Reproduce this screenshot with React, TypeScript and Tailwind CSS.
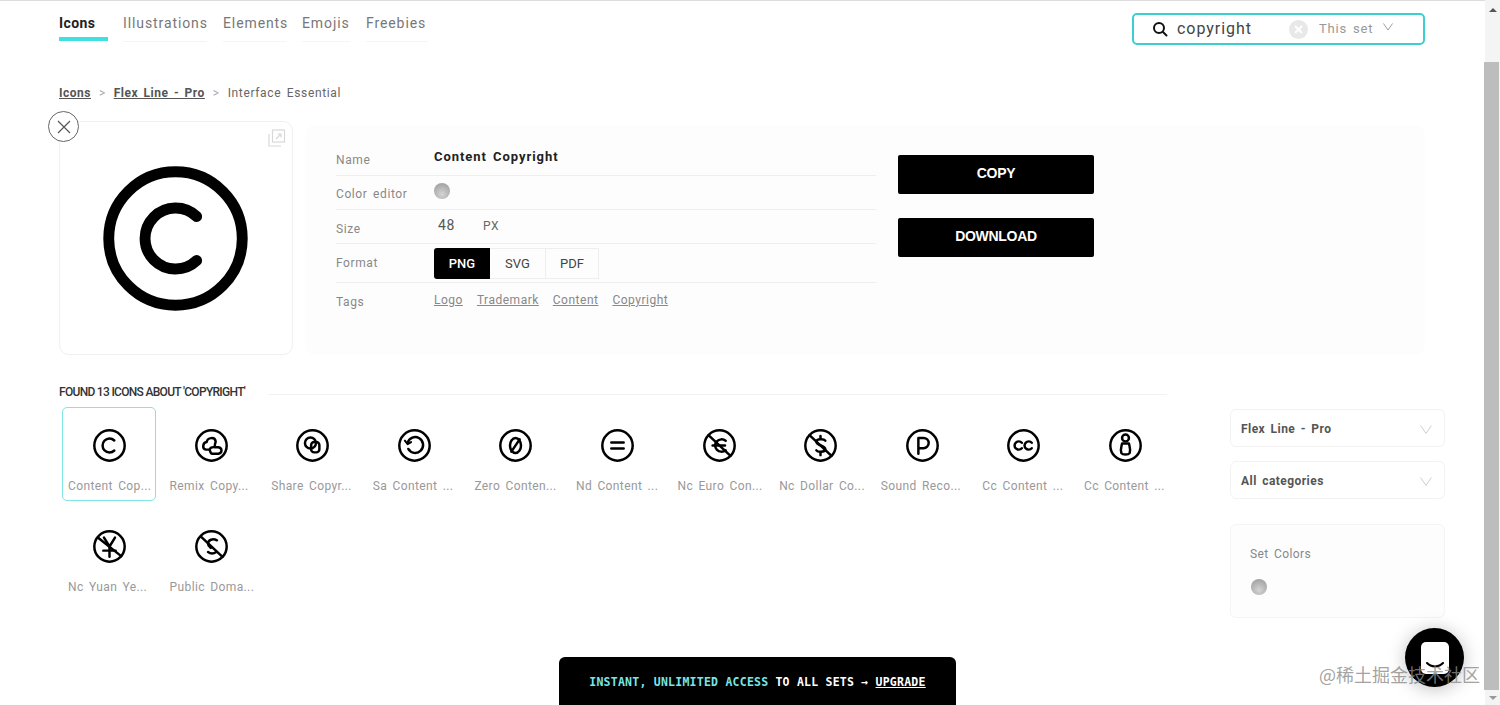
import React from "react";

const Ring = ({ children, size = 33 }: { children?: React.ReactNode; size?: number }) => (
  <svg width={size} height={size} viewBox="0 0 48 48" fill="none" stroke="#000" strokeWidth="3.6" strokeLinecap="round" strokeLinejoin="round">
    <circle cx="24" cy="24" r="22.1" />
    {children}
  </svg>
);

const Swatch = () => (
  <div className="w-4 h-4 rounded-full bg-[radial-gradient(circle_at_50%_70%,#d4d4d4,#969696)]" />
);

const Chevron = ({ w = 12, color = "#c4c4c4" }: { w?: number; color?: string }) => (
  <svg width={w} height={w * 0.75} viewBox="0 0 20 15" fill="none" stroke={color} strokeWidth="1.4">
    <path d="M1 1l9 13 9-13" />
  </svg>
);

const items: { label: string; g: React.ReactNode }[] = [
  { label: "Content Cop...", g: <path d="M31 16.700A10.100 10.100 0 1 0 31 31.300" /> },
  { label: "Remix Copy...", g: <path d="M17 19c-6 1-7 10-1 11h5c1-3 4-4 8-3.500M17 19c1-7 12-8 13-1 0 3-2 4-1 8.500h5c6 1 6 9 0 9.500H25c-3 0-3-6-4-5.500" /> },
  { label: "Share Copyr...", g: <><circle cx="21" cy="20.500" r="8" /><rect x="22" y="19" width="12" height="15" rx="4.500" /></> },
  { label: "Sa Content ...", g: <><path d="M14 20a11.500 11.500 0 1 1 1 9" /><path d="M10 17l4 5 5-3" strokeWidth="3" /></> },
  { label: "Zero Conten...", g: <><ellipse cx="24" cy="24" rx="8" ry="11" /><path d="M18 33l12-18" /></> },
  { label: "Nd Content ...", g: <path d="M15 19.500h18M15 28.500h18" /> },
  { label: "Nc Euro Con...", g: <><path d="M33 17a10 10 0 0 0-13 1c-3 3-3 9 0 12a10 10 0 0 0 13 1" /><path d="M14 24h18" /><path d="M8 9l32 30" /></> },
  { label: "Nc Dollar Co...", g: <><path d="M31 17c-2-3-12-3-13 1-1 6 14 6 13 12-1 4-11 4-13 1" /><path d="M24 10v3M24 35v3" /><path d="M8 9l32 30" /></> },
  { label: "Sound Reco...", g: <path d="M18 36V13h7.500a7.500 7.500 0 0 1 0 15H18" /> },
  { label: "Cc Content ...", g: <><path d="M21.500 20a6 6 0 1 0 0 8" /><path d="M36 20a6 6 0 1 0 0 8" /></> },
  { label: "Cc Content ...", g: <><circle cx="24" cy="13" r="5" /><path d="M19 21h10c1 5 3 9 1 14-2 3-10 3-12 0-2-5 0-9 1-14z" /></> },
  { label: "Nc Yuan Ye...", g: <><path d="M16 11l8 13 8-13M24 24v15M15 30h18" /><path d="M7 11l34 27" /></> },
  { label: "Public Doma...", g: <><path d="M32 15c-6-3-13-1-13 5 0 3 2 4 4 6" /><path d="M31 32c-3 2-8 3-12 0" /><path d="M9 10l31 29" /></> },
];

const font = "font-['Roboto',sans-serif]";

export default function App() {
  return (
    <div className={`relative flex w-full h-[705px] overflow-hidden bg-white ${font} [word-spacing:2px]`}>
      <div className="flex-1 min-w-0 flex flex-col">
        <div className="h-px bg-[#dcdcdc]" />
        {/* header */}
        <header className="flex items-start justify-between pl-[59px] pr-[60px] h-[70px]">
          <nav className="flex pt-[12px] text-[14px] tracking-[0.9px] text-[#777]">
            <div className="w-[49px] h-[28px] border-b-4 border-[#3fe0e0] font-bold text-[#222] tracking-[0.4px] mr-[15px]">Icons</div>
            <div className="w-[84px] h-[29px] border-b border-[#f5f5f5] mr-4 whitespace-nowrap">Illustrations</div>
            <div className="w-[63px] h-[29px] border-b border-[#f5f5f5] mr-4">Elements</div>
            <div className="w-[48px] h-[29px] border-b border-[#f5f5f5] mr-4">Emojis</div>
            <div className="w-[62px] h-[29px] border-b border-[#f5f5f5]">Freebies</div>
          </nav>
          <div className="mt-3 w-[293px] h-[32px] rounded-[5px] border-2 border-[#3ccfd2] flex items-center pl-[18px]">
            <svg width="16" height="16" viewBox="0 0 16 16" fill="none" stroke="#111" strokeWidth="2" strokeLinecap="round">
              <circle cx="7" cy="7" r="5" />
              <path d="M11 11l3.500 3.500" />
            </svg>
            <span className="ml-[9px] w-[112px] text-[16px] tracking-[0.95px] text-[#444]">copyright</span>
            <span className="w-[19px] h-[19px] rounded-full bg-[#e8e8e8] flex items-center justify-center">
              <svg width="9" height="9" viewBox="0 0 9 9" stroke="#fff" strokeWidth="2"><path d="M1 1l7 7M8 1l-7 7" /></svg>
            </span>
            <span className="ml-[11px] text-[13px] tracking-[0.8px] text-[#999]">This set</span>
            <span className="ml-[10px] mb-[4px]"><Chevron w={10} color="#777" /></span>
          </div>
        </header>

        <main className="flex flex-col pl-[59px]">
          <div className="h-[16px] mt-[14px] flex items-center text-[12px] tracking-[0.5px] text-[#666] whitespace-nowrap">
            <span className="font-bold underline text-[#555]">Icons</span>
            <span className="mx-2 text-[#aaa]">&gt;</span>
            <span className="font-bold underline text-[#555]">Flex Line - Pro</span>
            <span className="mx-2 text-[#aaa]">&gt;</span>
            <span className="tracking-[0.65px]">Interface Essential</span>
          </div>

          <section className="flex mt-[20px]">
            <div className="relative w-[234px] h-[234px] pr-[2px] rounded-[10px] border border-[#f0f0f0] flex items-center justify-center">
              <Ring size={145}><path d="M31 16.700A10.100 10.100 0 1 0 31 31.300" /></Ring>
              <div className="absolute left-[-12px] top-[-11px] w-[31px] h-[31px] rounded-full border border-[#666] bg-white flex items-center justify-center">
                <svg width="14" height="14" viewBox="0 0 14 14" stroke="#555" strokeWidth="1.200"><path d="M1 1l12 12M13 1L1 13" /></svg>
              </div>
              <svg className="absolute right-[6px] top-[7px]" width="18" height="18" viewBox="0 0 18 18" fill="none" stroke="#d8d8d8" strokeWidth="1.200">
                <rect x="4.500" y="1" width="12" height="12" />
                <path d="M1 5v12h12M8 10l5-5M9.500 5H13v3.500" />
              </svg>
            </div>

            <div className="ml-3 mt-1 w-[1120px] h-[230px] bg-[#fdfdfd] rounded-[10px] flex pl-[31px] pt-[16px]">
              <div className="w-[540px] text-[12px] tracking-[0.6px] text-[#888]">
                <div className="h-[35px] flex border-b border-[#eee]">
                  <div className="w-[98px] pt-[10px]">Name</div>
                  <div className="pt-[6px] text-[13px] font-bold text-[#222] tracking-[0.95px]">Content Copyright</div>
                </div>
                <div className="h-[34px] flex border-b border-[#eee]">
                  <div className="w-[98px] pt-[9px]">Color editor</div>
                  <div className="pt-[7px]"><Swatch /></div>
                </div>
                <div className="h-[34px] flex border-b border-[#eee]">
                  <div className="w-[98px] pt-[10px]">Size</div>
                  <div className="w-[49px] pt-[5px] pl-[4px] text-[14px] leading-[20px] text-[#555]">48</div>
                  <div className="pt-[7px] text-[#666]">PX</div>
                </div>
                <div className="h-[39px] flex border-b border-[#eee]">
                  <div className="w-[98px] pt-[10px]">Format</div>
                  <div className="pt-1">
                    <div className="flex h-[31px] text-[13px] tracking-[0px] text-[#444]">
                      <div className="w-[56px] bg-black text-white font-medium rounded-l-[3px] flex items-center justify-center">PNG</div>
                      <div className="w-[55px] border-y border-[#eee] flex items-center justify-center">SVG</div>
                      <div className="w-[54px] border border-[#eee] flex items-center justify-center">PDF</div>
                    </div>
                  </div>
                </div>
                <div className="flex">
                  <div className="w-[98px] pt-[10px]">Tags</div>
                  <div className="pt-[8px] flex gap-[14px] underline tracking-[0.5px] text-[#888]">
                    <span>Logo</span><span>Trademark</span><span>Content</span><span>Copyright</span>
                  </div>
                </div>
              </div>
              <div className="ml-[22px] pt-[14px] flex flex-col gap-6 font-['Liberation_Sans',sans-serif] font-bold text-[14px] text-white tracking-[-0.3px] [word-spacing:0]">
                <div className="w-[196px] h-[39px] bg-black rounded-[2px] flex items-center justify-center pb-[3px]">COPY</div>
                <div className="w-[196px] h-[39px] bg-black rounded-[2px] flex items-center justify-center pb-[3px]">DOWNLOAD</div>
              </div>
            </div>
          </section>

          <section className="flex mt-[30px]">
            <div className="w-[1108px]">
              <div className="flex items-center h-[14px]">
                <span className="text-[12px] font-medium text-[#333] tracking-[-0.7px] whitespace-nowrap [word-spacing:0]">FOUND 13 ICONS ABOUT 'COPYRIGHT'</span>
                <span className="flex-1 ml-[23px] mt-1 h-px bg-[#f2f2f2]" />
              </div>
              <div className="mt-2 pl-[3px] grid grid-cols-[repeat(11,94px)] gap-x-[7.600px] gap-y-[7px]">
                {items.map((it, i) => (
                  <div key={i} className={`h-[94px] rounded-[5px] flex flex-col items-center ${i === 0 ? "border border-[#7fe5e5] pt-[21px]" : "pt-[22px] pl-px"}`}>
                    <Ring size={33}>{it.g}</Ring>
                    <div className="w-full pl-[5px] mt-[15px] text-[12px] tracking-[0.38px] text-[#999] whitespace-nowrap">{it.label}</div>
                  </div>
                ))}
              </div>
            </div>

            <aside className="ml-[63px] w-[215px] pt-[24px] flex flex-col">
              <div className="h-[38px] rounded-[6px] border border-[#f2f2f2] flex items-center justify-between pl-[10px] pr-[12px] pt-[2px] text-[12px] font-bold tracking-[0.45px] text-[#555]">
                <span>Flex Line - Pro</span><Chevron />
              </div>
              <div className="mt-[14px] h-[38px] rounded-[6px] border border-[#f2f2f2] flex items-center justify-between pl-[10px] pr-[12px] pt-[2px] text-[12px] font-bold tracking-[0.45px] text-[#555]">
                <span>All categories</span><Chevron />
              </div>
              <div className="mt-[25px] h-[94px] rounded-[6px] border border-[#f4f4f4] bg-[#fdfdfd] pl-[19px] pt-[21px]">
                <div className="text-[12px] tracking-[0.4px] text-[#888] leading-[16px]">Set Colors</div>
                <div className="mt-[17px] pl-px"><Swatch /></div>
              </div>
            </aside>
          </section>
        </main>
      </div>

      {/* browser scrollbar */}
      <div className="w-[15px] h-full bg-[#f4f4f4] flex flex-col items-center justify-between">
        <div className="flex-none w-full h-[62px] flex justify-center pt-[8px]">
          <div className="w-0 h-0 border-x-[4px] border-x-transparent border-b-[4px] border-b-[#555]" />
        </div>
        <div className="flex-1 w-full bg-[#bdbdbd] mr-[2px]" />
        <div className="flex-none h-[15px] w-full flex justify-center pt-[6px]">
          <div className="w-0 h-0 border-x-[4px] border-x-transparent border-t-[4px] border-t-[#999]" />
        </div>
      </div>

      {/* upgrade banner */}
      <div className="absolute left-[559px] bottom-0 w-[397px] h-[48px] bg-black rounded-t-[6px] flex items-center justify-center pt-[3px] text-[11.500px] font-bold tracking-[0.24px] text-white whitespace-nowrap font-['DejaVu_Sans_Mono','Liberation_Mono',monospace] [word-spacing:0]">
        <span className="text-[#79e6e6]">INSTANT, UNLIMITED ACCESS</span>
        <span className="ml-[7px]">TO ALL SETS →</span>
        <span className="ml-[7px] underline">UPGRADE</span>
      </div>

      {/* chat button */}
      <div className="absolute left-[1405px] top-[628px] w-[59px] h-[59px] rounded-full bg-black shadow-[0_2px_18px_rgba(0,0,0,0.25)] flex items-center justify-center">
        <div className="w-[28px] h-[32px] bg-white rounded-[5px] flex items-end justify-center pb-[5px]">
          <svg width="20" height="7" viewBox="0 0 20 7" fill="none" stroke="#000" strokeWidth="2" strokeLinecap="round"><path d="M2 1c4 4.500 12 4.500 16 0" /></svg>
        </div>
      </div>

      {/* watermark */}
      <div className="absolute left-[1319px] top-[661px] text-[18px] leading-[26px] text-[#8a8a8a]/80 whitespace-nowrap font-['Noto_Sans_CJK_SC',sans-serif] [word-spacing:0]">@稀土掘金技术社区</div>
    </div>
  );
}
